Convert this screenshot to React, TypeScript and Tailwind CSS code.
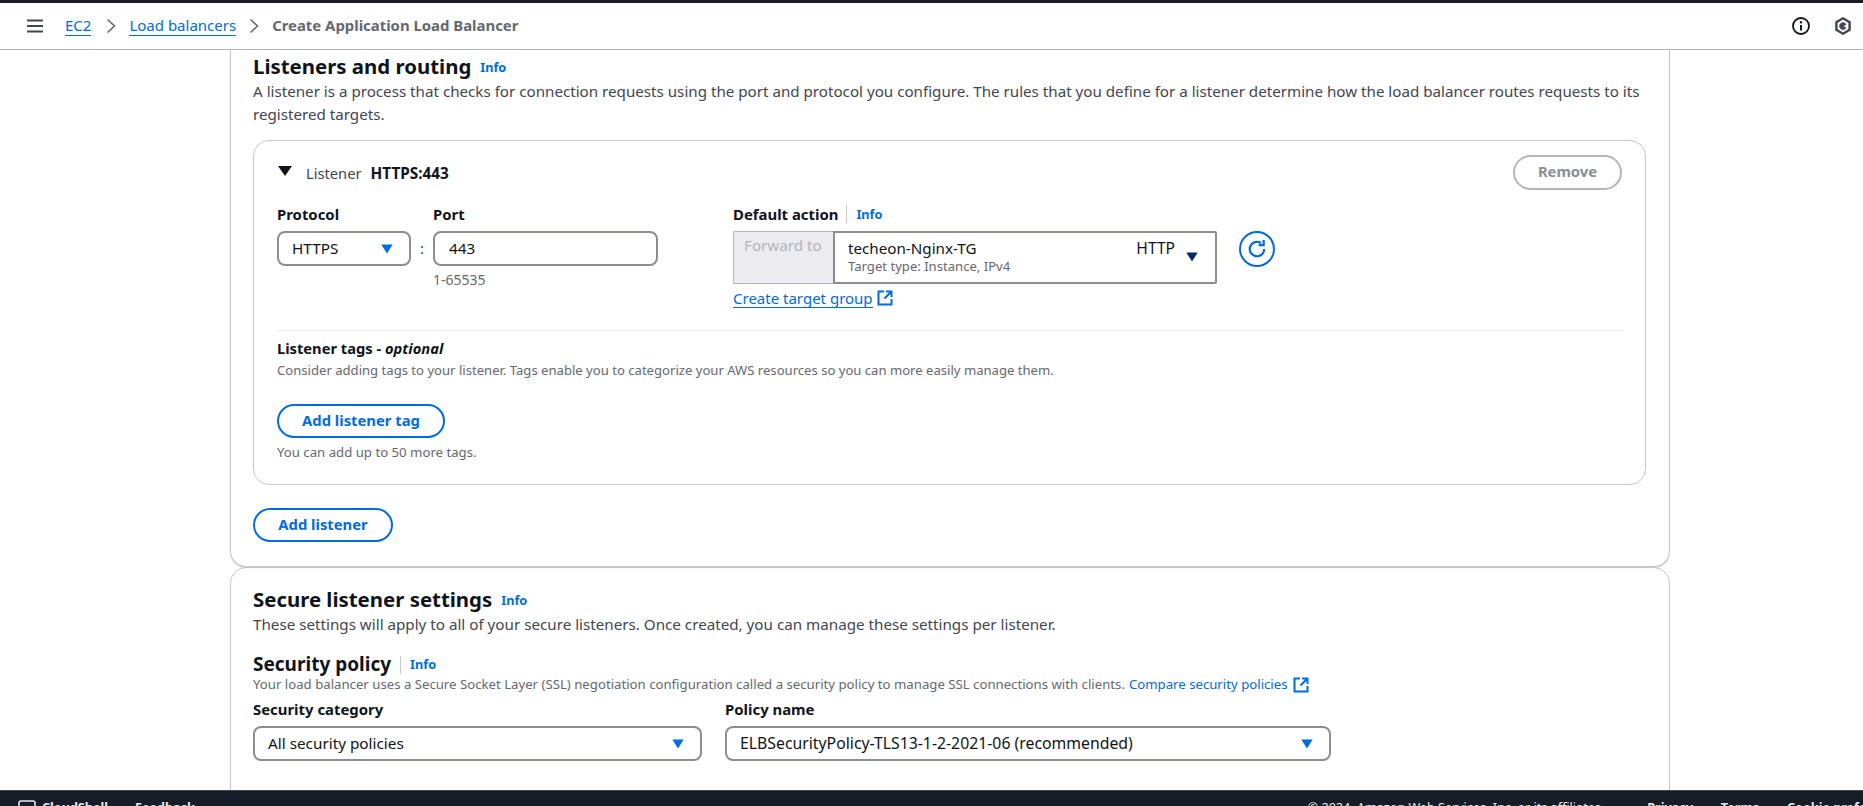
import React from "react";

function Caret({ className = "text-[#006ce0]" }: { className?: string }) {
  return (
    <svg width="12" height="10" viewBox="0 0 12 10" className={className}>
      <path d="M0.3 0.5h11.4L6 9.5z" fill="currentColor" />
    </svg>
  );
}

function ExternalIcon({ className = "" }: { className?: string }) {
  return (
    <svg width="16" height="16" viewBox="0 0 16 16" fill="none" stroke="currentColor" strokeWidth="2" className={className}>
      <path d="M7 1.5H1.5v13h13V9" />
      <path d="M9 1.5h5.5V7M14.5 1.5L7.5 8.5" />
    </svg>
  );
}

function InfoLink({ className = "" }: { className?: string }) {
  return <a className={"text-[12.7px] font-bold text-[#006ce0] " + className}>Info</a>;
}

function Select({ value, textClass = "text-[15.3px]", className = "" }: { value: string; textClass?: string; className?: string }) {
  return (
    <div className={"flex h-[35px] items-center justify-between rounded-lg border-2 border-[#8c8c94] bg-white pl-[13px] pr-[16px] text-[#0f141a] " + className}>
      <span className={textClass}>{value}</span>
      <Caret />
    </div>
  );
}

function Button({ children, className = "" }: { children: React.ReactNode; className?: string }) {
  return (
    <button className={"flex h-[34px] items-center justify-center rounded-full border-2 border-[#006ce0] bg-white pb-[2px] text-[14.8px] font-bold text-[#006ce0] " + className}>
      {children}
    </button>
  );
}

function Header() {
  return (
    <header className="shrink-0">
      <div className="h-[3px] bg-[#161d26]" />
      <div className="flex h-[47px] items-center border-b border-[#b4b4bb] bg-white pl-[27px] pr-[12px]">
        <svg width="16" height="14" viewBox="0 0 16 14" stroke="#424650" strokeWidth="2">
          <path d="M0 1.5h16M0 7h16M0 12.5h16" />
        </svg>
        <a className="-mt-[1px] ml-[22px] border-b border-[#006ce0] text-[15px] leading-[19px] text-[#006ce0]">EC2</a>
        <svg width="10" height="16" viewBox="0 0 10 16" fill="none" stroke="#656871" strokeWidth="1.6" className="ml-[15px]">
          <path d="M1.5 1.5L8.5 8l-7 6.5" />
        </svg>
        <a className="-mt-[1px] ml-[13px] border-b border-[#006ce0] text-[15px] leading-[19px] text-[#006ce0]">Load balancers</a>
        <svg width="10" height="16" viewBox="0 0 10 16" fill="none" stroke="#656871" strokeWidth="1.6" className="ml-[13px]">
          <path d="M1.5 1.5L8.5 8l-7 6.5" />
        </svg>
        <span className="-mt-[2px] ml-[13px] text-[14.9px] font-bold text-[#656871]">Create Application Load Balancer</span>
        <div className="ml-auto flex items-center gap-[25px]">
          <svg width="18" height="18" viewBox="0 0 18 18" fill="none" stroke="#0f141a" strokeWidth="1.8">
            <circle cx="9" cy="9" r="8" />
            <path d="M9 8v5.5" strokeWidth="2" />
            <path d="M9 4.2v2.2" strokeWidth="2.2" />
          </svg>
          <svg width="16" height="18" viewBox="0 0 16 18" fill="none" stroke="#424650" strokeWidth="2.4">
            <path d="M8 1.3l6.6 3.8v7.8L8 16.7l-6.6-3.8V5.1z" />
            <path d="M10.8 11A3.4 3.4 0 1 1 11 7.4L8 9z" fill="#424650" strokeWidth="0.8" />
          </svg>
        </div>
      </div>
    </header>
  );
}

function ListenerCard() {
  return (
    <div className="mt-[15px] mr-[23px] h-[345px] rounded-2xl border border-[#c6c6cd] px-[23px] pt-[14px]">
      <div className="flex h-[35px] items-center">
        <svg width="14" height="10" viewBox="0 0 14 10" className="ml-px -mt-[3px]">
          <path d="M0 0h14L7 10z" fill="#0f141a" />
        </svg>
        <span className="ml-[14px] mt-[2px] text-[14.7px] text-[#424650]">Listener</span>
        <span className="ml-[9px] mt-[2px] text-[15.3px] font-bold text-[#0f141a]">HTTPS:443</span>
        <button className="ml-auto flex h-[35px] w-[109px] items-center justify-center rounded-full border-2 border-[#b4b4bb] pb-[2px] text-[14.8px] font-bold text-[#8c8c94]">
          Remove
        </button>
      </div>
      <div className="mt-[15px] flex h-[125px]">
        <div className="w-[134px]">
          <div className="h-[18px] text-[14.9px] font-bold leading-[18px] text-[#0f141a]">Protocol</div>
          <Select value="HTTPS" className="mt-[8px]" />
        </div>
        <div className="mt-[26px] flex h-[35px] w-[22px] items-center justify-center text-[15px] text-[#424650]">:</div>
        <div className="w-[225px]">
          <div className="h-[18px] text-[14.9px] font-bold leading-[18px] text-[#0f141a]">Port</div>
          <div className="mt-[8px] flex h-[35px] items-center rounded-lg border-2 border-[#8c8c94] pl-[14px] text-[15.3px] text-[#0f141a]">443</div>
          <div className="mt-[6px] text-[14px] leading-[16px] text-[#656871]">1-65535</div>
        </div>
        <div className="ml-[75px] w-[484px]">
          <div className="flex h-[18px] items-center text-[14.9px] font-bold leading-[18px] text-[#0f141a]">
            Default action
            <span className="ml-[8px] h-[18px] w-px bg-[#c6c6cd]" />
            <InfoLink className="ml-[9px]" />
          </div>
          <div className="mt-[8px] flex h-[53px]">
            <div className="w-[100px] rounded-l-[2px] border border-r-0 border-[#b4b4bb] bg-[#ebebf0] pl-[10px] pt-[3px] text-[15.2px] leading-[20px] text-[#b4b4bb]">
              Forward to
            </div>
            <div className="flex flex-1 rounded-r-[2px] border-2 border-[#8c8c94] pl-[13px] pr-[17px]">
              <div className="flex-1">
                <div className="mt-[5px] text-[15.2px] leading-[20px] text-[#0f141a]">techeon-Nginx-TG</div>
                <div className="text-[13.1px] leading-[17px] text-[#656871]">Target type: Instance, IPv4</div>
              </div>
              <div className="mt-[5px] text-[15.6px] leading-[20px] text-[#0f141a]">HTTP</div>
              <Caret className="ml-[11px] mt-[19px] text-[#002a66]" />
            </div>
          </div>
          <div className="mt-[4px] flex h-[20px] items-center text-[15px] text-[#006ce0]">
            <a className="border-b border-[#006ce0] leading-[18px]">Create target group</a>
            <ExternalIcon className="ml-[4px]" />
          </div>
        </div>
        <button className="ml-[22px] mt-[26px] flex h-[36px] w-[36px] items-center justify-center rounded-full border-2 border-[#006ce0]">
          <svg width="20" height="20" viewBox="0 0 18 18" fill="none" stroke="#006ce0" strokeWidth="2">
            <path d="M15.5 9A6.5 6.5 0 1 1 12.6 3.6" />
            <path d="M15 1v4.6h-4.6" />
          </svg>
        </button>
      </div>
      <div className="h-px bg-[#e8e8ed]" />
      <div className="mt-[8px] h-[18px] text-[14.7px] font-bold leading-[18px] text-[#0f141a]">
        Listener tags - <i>optional</i>
      </div>
      <div className="mt-[4px] text-[13.1px] leading-[18px] text-[#656871]">
        Consider adding tags to your listener. Tags enable you to categorize your AWS resources so you can more easily manage them.
      </div>
      <Button className="mt-[25px] w-[168px]">Add listener tag</Button>
      <div className="mt-[6px] text-[13.2px] leading-[16px] text-[#656871]">You can add up to 50 more tags.</div>
    </div>
  );
}

export default function App() {
  return (
    <div className="flex h-[806px] flex-col overflow-hidden bg-white font-[family-name:'Noto_Sans',sans-serif]">
      <Header />
      <main className="min-h-0 flex-1 overflow-hidden">
        <section className="ml-[230px] h-[517px] w-[1440px] rounded-b-2xl border border-t-0 border-[#c6c6cd] pl-[22px] shadow-[0_1px_1px_#c6c6cd]">
          <div className="flex h-[30px] items-center pt-[3px]">
            <h2 className="text-[20.4px] font-bold text-[#0f141a]">Listeners and routing</h2>
            <InfoLink className="ml-[9px] mt-[3px]" />
          </div>
          <p className="mr-[22px] text-[15.17px] leading-[22.5px] text-[#424650]">
            A listener is a process that checks for connection requests using the port and protocol you configure. The rules that you define for a listener determine how the load balancer routes requests to its registered targets.
          </p>
          <ListenerCard />
          <Button className="mt-[23px] w-[140px]">Add listener</Button>
        </section>
        <section className="ml-[230px] h-[300px] w-[1440px] rounded-t-2xl border border-[#c6c6cd] pl-[22px] pt-[17px]">
          <div className="flex h-[28px] items-center">
            <h2 className="text-[20.4px] font-bold text-[#0f141a]">Secure listener settings</h2>
            <InfoLink className="ml-[9px] mt-[3px]" />
          </div>
          <p className="mt-[1px] text-[15.2px] leading-[20px] text-[#424650]">
            These settings will apply to all of your secure listeners. Once created, you can manage these settings per listener.
          </p>
          <div className="mt-[18px] flex h-[25px] items-center">
            <h3 className="text-[19px] font-bold text-[#0f141a]">Security policy</h3>
            <span className="ml-[9px] h-[18px] w-px bg-[#c6c6cd]" />
            <InfoLink className="ml-[9px]" />
          </div>
          <div className="flex h-[16px] items-center text-[13.2px] text-[#656871]">
            Your load balancer uses a Secure Socket Layer (SSL) negotiation configuration called a security policy to manage SSL connections with clients.
            <a className="ml-[4px] text-[#006ce0]">Compare security policies</a>
            <ExternalIcon className="ml-[5px] text-[#006ce0]" />
          </div>
          <div className="mt-[7px] flex gap-[23px]">
            <div className="w-[449px]">
              <div className="h-[18px] text-[14.9px] font-bold leading-[18px] text-[#0f141a]">Security category</div>
              <Select value="All security policies" className="mt-[8px]" />
            </div>
            <div className="w-[606px]">
              <div className="h-[18px] text-[14.9px] font-bold leading-[18px] text-[#0f141a]">Policy name</div>
              <Select value="ELBSecurityPolicy-TLS13-1-2-2021-06 (recommended)" textClass="text-[15.8px]" className="mt-[8px]" />
            </div>
          </div>
        </section>
      </main>
      <footer className="flex h-[16px] shrink-0 items-start overflow-hidden border-t border-[#424650] bg-[#161d26] pl-[18px] pt-[7px] text-[12.6px] font-bold leading-[20px] text-[#e8e8ed]">
        <svg width="18" height="16" viewBox="0 0 18 16" fill="none" stroke="#e8e8ed" strokeWidth="1.6" className="mt-[2px] shrink-0">
          <rect x="1" y="1" width="16" height="14" rx="2" />
        </svg>
        <span className="ml-[6px] shrink-0">CloudShell</span>
        <span className="ml-[27px] shrink-0">Feedback</span>
        <span className="ml-auto shrink-0 font-normal">© 2024, Amazon Web Services, Inc. or its affiliates.</span>
        <span className="ml-[43px] shrink-0">Privacy</span>
        <span className="ml-[28px] shrink-0">Terms</span>
        <span className="ml-[28px] w-[76px] shrink-0 whitespace-nowrap">Cookie preferences</span>
      </footer>
    </div>
  );
}
